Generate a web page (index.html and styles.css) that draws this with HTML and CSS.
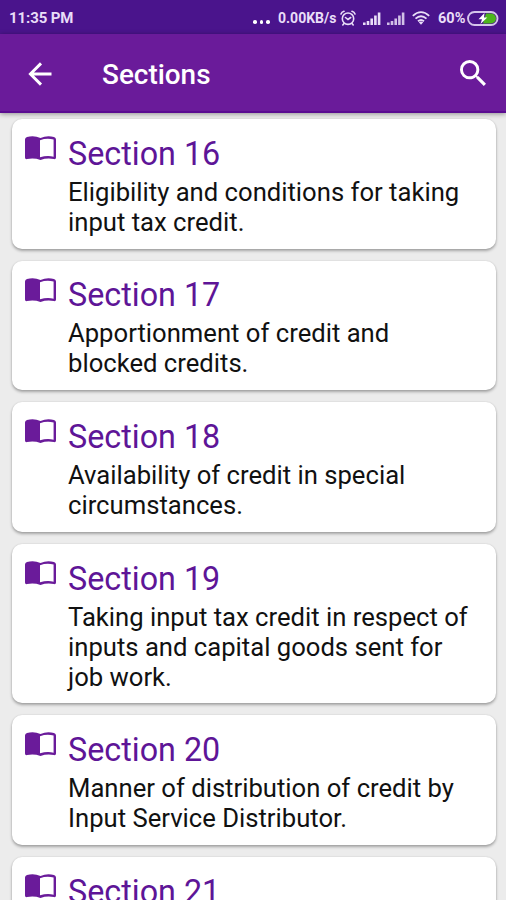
FILE: index.html
```
<!DOCTYPE html>
<html lang="en">
<head>
<meta charset="utf-8">
<title>Sections</title>
<link rel="stylesheet" href="styles.css">
</head>
<body>
<svg class="defs" width="0" height="0" aria-hidden="true">
  <symbol id="book" viewBox="0 0 31 25">
    <path fill="currentColor" fill-rule="evenodd" d="M0 3.500Q0 1.600 2 1Q9-.8 15.500 1.900Q22-.8 29 1Q31 1.600 31 3.500V21.500Q31 23.400 29 23.100Q22 21.700 15.500 24Q9 21.700 2 23.100Q0 23.400 0 21.500ZM15 4.200V21.300Q22 19.300 28.600 20.700V3.600Q22 1.800 15 4.200Z"/>
  </symbol>
  <symbol id="signal" viewBox="0 0 18 13">
    <path fill="currentColor" d="M0 10.500h2.600V13H0zM3.700 9h2.600v4H3.700zM7.400 6.500H10V13H7.400zM11.100 3.500h2.600V13h-2.600z"/>
    <path class="last-bar" fill="currentColor" d="M14.800 .5h2.600V13h-2.600z"/>
  </symbol>
</svg>
<header class="status">
  <span class="clock">11:35 PM</span>
  <span class="dots"><i></i><i></i><i></i></span>
  <span class="rate">0.00KB/s</span>
  <svg class="alarm" viewBox="0 0 16 16" fill="none" stroke="currentColor" stroke-width="1.600" stroke-linecap="round"><circle cx="8" cy="8.700" r="5.700"/><path d="M1 4Q1.700 2 4 1.300M15 4Q14.300 2 12 1.300M5.500 7.500L8 9.500l2.700-2M4 13.500l-1.200 1.500M12 13.500l1.200 1.500"/></svg>
  <svg class="signal"><use href="#signal"/></svg>
  <svg class="signal faded"><use href="#signal"/></svg>
  <svg class="wifi" viewBox="0 0 18 14" fill="none" stroke="currentColor" stroke-width="1.800"><path d="M.8 4.800Q9-2.600 17.200 4.800M3.500 7.700Q9 2.800 14.500 7.700M6 10.300Q9 7.700 12 10.300"/><path fill="currentColor" stroke="none" d="M6.800 11.300Q9 9.800 11.200 11.300L9 13.800z"/></svg>
  <span class="percent">60%</span>
  <svg class="battery" viewBox="0 0 32 15"><path fill="#4cb51c" d="M19 2.500h5a5 5 0 0 1 0 10h-8z"/><rect x="1" y="1" width="29.500" height="13" rx="6.500" fill="none" stroke="#d5c5eb" stroke-width="1.900"/><path fill="#fff" d="M17.500 2L11.500 8.300h3.500L13.500 13l6.800-6.400H17z"/></svg>
</header>
<nav class="bar">
  <svg class="back" viewBox="0 0 24 24" fill="none" stroke="currentColor" stroke-width="2.900"><path d="M23.500 12H2.800M13 1.400L2.400 12l10.600 10.600"/></svg>
  <h1>Sections</h1>
  <svg class="search" viewBox="3 3 17.490 17.490"><path fill="currentColor" d="M15.500 14h-.79l-.28-.27A6.470 6.470 0 0 0 16 9.500 6.500 6.500 0 1 0 9.500 16c1.610 0 3.090-.59 4.230-1.570l.27.28v.79l5 4.990L20.490 19l-4.990-5zm-6 0C7.010 14 5 11.990 5 9.500S7.010 5 9.500 5 14 7.010 14 9.500 11.990 14 9.500 14z"/></svg>
</nav>
<main class="list">
  <article class="card"><svg class="book"><use href="#book"/></svg><div><h2>Section 16</h2><p>Eligibility and conditions for taking<br>input tax credit.</p></div></article>
  <article class="card"><svg class="book"><use href="#book"/></svg><div><h2>Section 17</h2><p>Apportionment of credit and<br>blocked credits.</p></div></article>
  <article class="card"><svg class="book"><use href="#book"/></svg><div><h2>Section 18</h2><p>Availability of credit in special<br>circumstances.</p></div></article>
  <article class="card"><svg class="book"><use href="#book"/></svg><div><h2>Section 19</h2><p>Taking input tax credit in respect of<br>inputs and capital goods sent for<br>job work.</p></div></article>
  <article class="card"><svg class="book"><use href="#book"/></svg><div><h2>Section 20</h2><p>Manner of distribution of credit by<br>Input Service Distributor.</p></div></article>
  <article class="card"><svg class="book"><use href="#book"/></svg><div><h2>Section 21</h2></div></article>
</main>
</body>
</html>
```
FILE: styles.css
```
* { box-sizing: border-box; margin: 0; padding: 0; }
body { height: 900px; overflow: hidden; display: flex; flex-direction: column; background: #ececec; font-family: Roboto, "Liberation Sans", sans-serif; }
svg { display: block; flex: none; }
.defs { position: absolute; }
.status { flex: none; height: 34px; padding: 2px 6px 0 9px; display: flex; align-items: center; background: #4a148c; color: #e9def8; font-size: 15px; font-weight: 700; white-space: nowrap; }
.clock { flex: none; width: 244px; letter-spacing: -.1px; }
.dots { flex: none; display: flex; gap: 3px; width: 25px; padding-top: 8px; }
.dots i { width: 3.500px; height: 3.500px; border-radius: 50%; background: #fff; }
.rate { flex: none; width: 62px; font-size: 14px; }
.alarm { width: 16px; height: 16px; margin-right: 7px; }
.signal { width: 18px; height: 13px; margin-right: 6px; }
.faded { margin-right: 7px; }
.faded { opacity: .85; }
.wifi { width: 18px; height: 14px; margin-right: 8px; }
.percent { flex: none; width: 29px; font-size: 14.500px; }
.battery { width: 32px; height: 15px; }
.bar { flex: none; height: 79px; padding: 0 20px 0 28px; display: flex; align-items: center; background: #6a1b9a; border-bottom: 2px solid #5a0c91; color: #fff; box-shadow: 0 1px 5px rgba(0,0,0,.4); }
.back { width: 24px; height: 24px; margin-top: 2px; }
.bar h1 { flex: 1; margin: 4px 0 0 50px; font-size: 27.900px; font-weight: 500; line-height: 34px; }
.search { width: 26px; height: 26px; }
.list { flex: 1; min-height: 0; overflow: hidden; padding: 6px 10.500px 0 11.500px; display: flex; flex-direction: column; gap: 12px; }
.card { flex: none; display: flex; gap: 13px; padding: 15.900px 12px 11.700px 13px; background: #fff; border-radius: 10px; box-shadow: 0 2px 3px rgba(0,0,0,.3), 0 0 2px rgba(0,0,0,.12); }
.card:last-child { height: 130px; margin-bottom: -90px; }
.book { width: 31px; height: 25px; margin-top: 1.200px; color: #6a1b9a; }
.card h2 { margin-left: -.5px; height: 42px; line-height: 39px; font-size: 32.300px; font-weight: 400; color: #5e1597; white-space: nowrap; }
.card p { margin-left: -.5px; font-size: 25.650px; line-height: 30px; color: #111; white-space: nowrap; }
```
